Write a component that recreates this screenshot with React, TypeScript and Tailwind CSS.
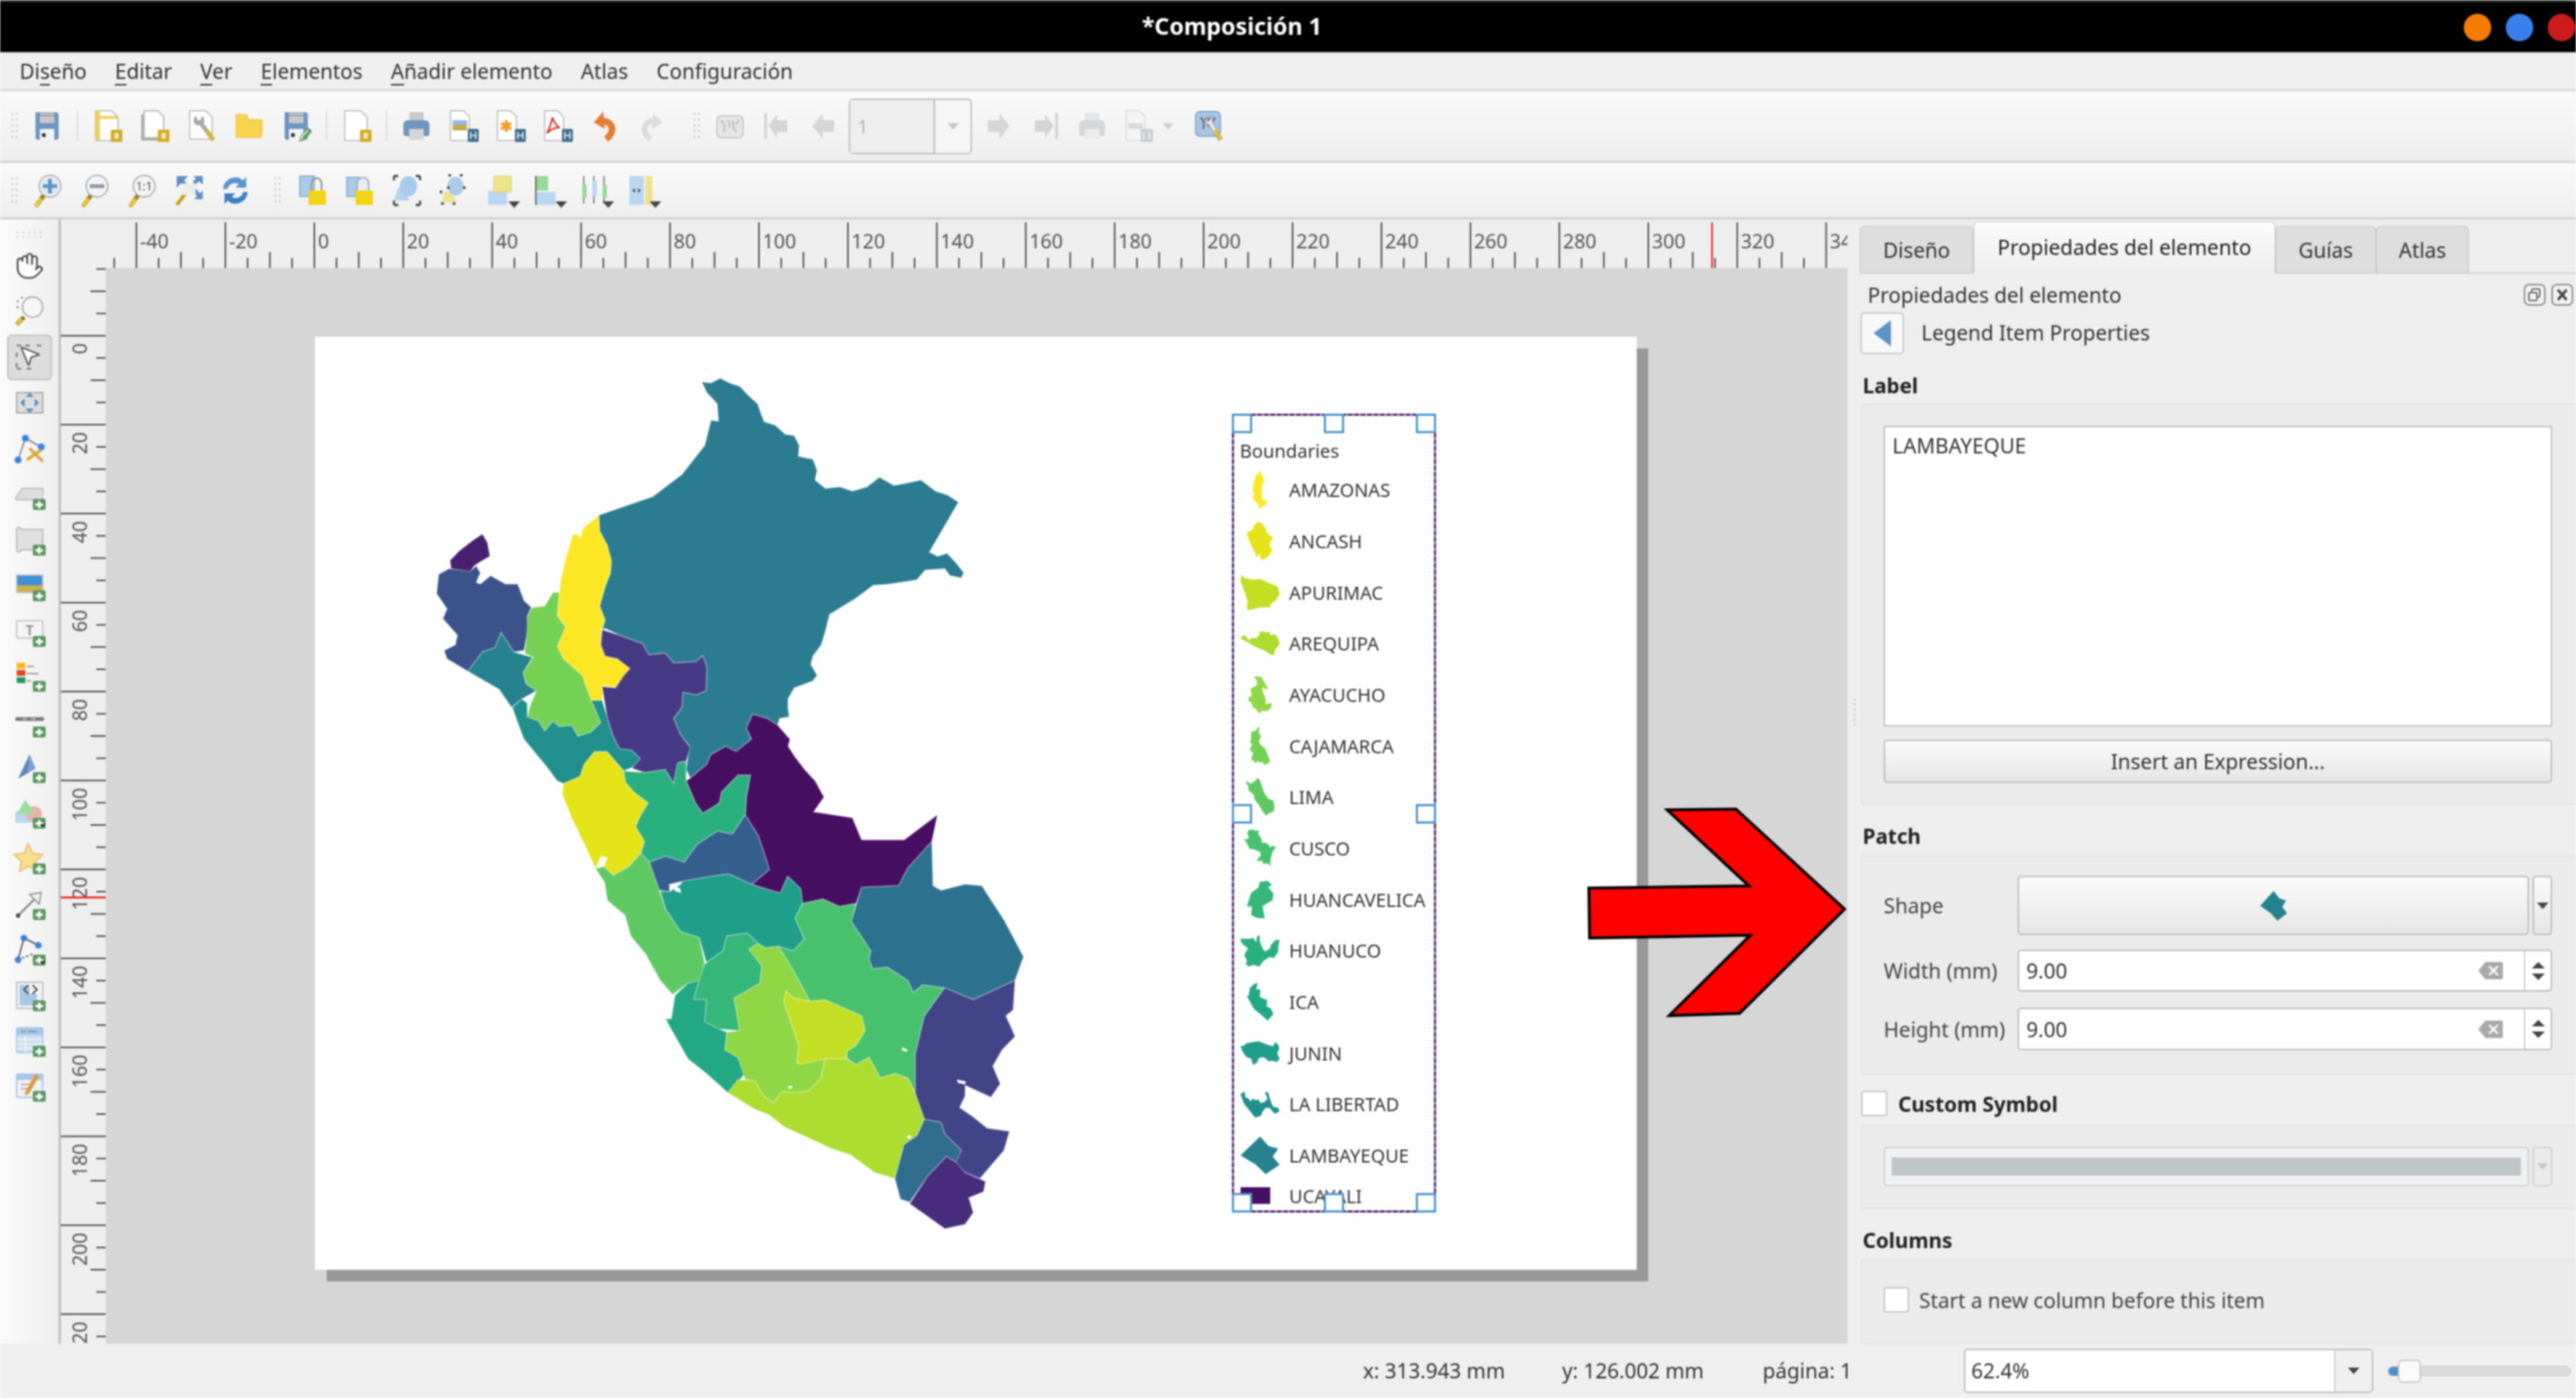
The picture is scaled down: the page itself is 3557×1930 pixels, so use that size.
import { Hand, MousePointer2 } from "lucide-react";
import type { ReactNode } from "react";

// region outlines, traced in the two crop spaces and mapped to screen pixels
const north = (s: string) =>
  s.split(" ").map((p) => {
    const [x, y] = p.split(",").map(Number);
    return [580 + x / 1.742, 500 + y / 2.613];
  });
const south = (s: string) =>
  s.split(" ").map((p) => {
    const [x, y] = p.split(",").map(Number);
    return [700 + x / 1.96, 1080 + y / 2.45];
  });

const regions: Record<string, { fill: string; pts: number[][] }> = {
  LORETO: {
    fill: "#2c7c91",
    pts: north(
      "678,72 700,75 722,58 745,75 770,88 790,120 812,150 820,185 828,215 855,228 878,260 900,265 912,300 910,340 945,350 955,390 950,425 975,455 1010,450 1040,465 1075,450 1105,415 1140,445 1175,435 1205,425 1240,465 1270,480 1295,505 1225,685 1245,700 1268,690 1290,725 1308,760 1302,778 1275,770 1262,745 1215,750 1195,785 1130,800 1090,805 1050,850 985,910 975,970 965,1020 945,1060 940,1090 955,1130 945,1150 900,1175 885,1215 885,1250 888,1280 865,1285 860,1310 835,1285 800,1270 785,1320 797,1360 760,1405 735,1385 700,1415 690,1450 650,1500 640,1470 648,1385 625,1340 610,1285 630,1245 632,1190 665,1200 688,1185 690,1100 680,1058 665,1080 610,1085 590,1050 550,1055 535,1015 480,985 445,960 438,965 445,930 432,880 445,810 458,760 460,715 450,660 432,610 430,552 560,485 630,405 685,300 700,210 718,213 715,150 690,110"
    ),
  },
  AMAZONAS: {
    fill: "#fde725",
    pts: north(
      "430,552 432,610 450,660 460,715 458,760 445,810 432,880 445,930 436,965 435,1020 445,1060 475,1070 505,1105 490,1130 470,1175 440,1165 438,1220 412,1220 390,1130 345,1070 330,1025 350,955 330,915 338,790 350,710 368,620 378,620 385,635 392,600"
    ),
  },
  TUMBES: {
    fill: "#481f70",
    pts: north("150,620 162,650 168,700 145,720 130,735 120,758 75,745 72,715 95,680 125,645"),
  },
  PIURA: {
    fill: "#3b528b",
    pts: north(
      "70,745 120,755 135,735 145,760 135,795 145,800 170,770 205,800 235,800 250,860 268,885 258,915 262,960 255,1000 250,1040 225,1045 195,975 180,1030 150,1045 115,1115 65,1070 58,1040 85,1020 90,985 55,925 65,890 40,835 45,765"
    ),
  },
  LAMBAYEQUE: {
    fill: "#26828e",
    pts: north("195,975 225,1045 270,1065 248,1120 255,1160 280,1185 245,1215 220,1245 190,1180 115,1115 150,1045 180,1030"),
  },
  CAJAMARCA: {
    fill: "#75d054",
    pts: north(
      "320,830 335,830 330,915 350,955 330,1025 345,1070 390,1130 412,1220 435,1300 410,1335 380,1350 365,1310 335,1315 320,1295 300,1330 285,1295 258,1280 265,1240 280,1185 255,1160 248,1120 272,1065 252,1050 258,960 258,915 270,885 300,880"
    ),
  },
  "LA LIBERTAD": {
    fill: "#21908c",
    pts: north(
      "245,1215 258,1230 258,1280 285,1295 300,1330 320,1295 335,1315 365,1310 380,1350 410,1335 435,1300 412,1220 438,1220 450,1280 465,1350 480,1395 510,1400 530,1430 520,1455 490,1475 450,1405 420,1405 395,1450 385,1495 345,1520 330,1510 305,1460 250,1360 235,1300 222,1245"
    ),
  },
  "SAN MARTIN": {
    fill: "#463a84",
    pts: north(
      "438,965 480,985 535,1015 550,1055 590,1050 610,1085 665,1080 680,1058 690,1100 688,1185 665,1200 632,1190 630,1245 610,1285 625,1340 650,1390 640,1440 620,1445 610,1520 590,1470 540,1480 510,1465 530,1430 510,1400 480,1395 465,1350 450,1280 438,1170 470,1175 490,1130 505,1105 475,1070 445,1060 435,1020"
    ),
  },
  UCAYALI: {
    fill: "#470f62",
    pts: south(
      "665,-230 704,-216 733,-193 766,-146 761,-122 778,-89 806,-43 834,-5 858,50 830,100 935,120 960,195 1075,195 1165,110 1150,200 1085,290 1060,350 960,355 945,410 900,420 855,395 800,410 795,360 760,318 740,375 700,360 662,345 710,295 695,235 680,180 645,110 648,50 659,-24 625,-24 581,33 575,70 530,105 510,70 485,-5 496,-14 541,-61 552,-94 592,-122 620,-104 662,-146 648,-183"
    ),
  },
  HUANUCO: {
    fill: "#2ab07f",
    pts: south(
      "316,-38 372,-33 429,-43 451,4 462,-66 485,-71 485,-5 510,70 530,105 575,70 581,33 625,-24 659,-24 648,50 645,110 610,175 570,165 515,210 480,270 430,250 385,270 362,240 372,200 348,150 362,110 382,70 345,35 320,0"
    ),
  },
  ANCASH: {
    fill: "#e4e419",
    pts: south(
      "150,40 175,120 210,210 240,292 255,250 272,255 262,285 288,315 330,285 362,240 372,200 348,150 362,110 382,70 345,35 320,0 316,-38 271,-103 237,-103 209,-61 198,-19 153,4"
    ),
  },
  PASCO: {
    fill: "#35608d",
    pts: south(
      "645,110 680,180 695,235 710,295 662,345 600,310 545,320 475,335 440,345 440,370 412,365 385,270 430,250 480,270 515,210 570,165 610,175"
    ),
  },
  JUNIN: {
    fill: "#1f9e89",
    pts: south(
      "415,368 440,370 470,345 475,335 545,320 600,310 662,345 700,360 740,375 760,318 795,360 800,410 780,460 805,530 775,570 735,555 700,560 680,545 650,510 595,520 585,570 540,610 520,525 470,505 430,430"
    ),
  },
  LIMA: {
    fill: "#5ec962",
    pts: south(
      "240,292 262,285 288,315 330,285 362,240 385,270 412,365 430,430 470,505 520,525 535,610 525,670 490,680 448,718 415,670 375,580 335,520 320,450 272,400 265,340"
    ),
  },
  HUANCAVELICA: {
    fill: "#35b779",
    pts: south("595,520 650,510 680,545 655,565 690,620 685,680 615,730 630,840 575,835 535,810 540,735 505,735 520,670 535,615 585,570"),
  },
  ICA: {
    fill: "#22a884",
    pts: south(
      "490,680 520,670 505,735 540,735 535,810 575,835 595,845 590,905 625,930 645,985 598,1050 540,985 490,935 440,825 430,800 445,800 455,720"
    ),
  },
  AYACUCHO: {
    fill: "#8fd744",
    pts: south(
      "655,565 680,545 700,560 735,555 770,625 820,740 775,730 755,705 750,745 790,890 785,950 860,935 850,1000 815,1045 770,1050 745,1045 720,1085 695,1060 670,1010 645,1005 625,930 590,905 595,845 630,840 615,730 685,680 690,620"
    ),
  },
  APURIMAC: {
    fill: "#c2df23",
    pts: south("755,705 775,730 820,740 860,735 960,790 970,840 945,890 920,910 918,935 860,935 795,955 785,945 790,890 750,745"),
  },
  CUSCO: {
    fill: "#48c16e",
    pts: south(
      "800,410 855,395 900,420 945,410 932,470 985,570 980,600 990,630 1030,625 1085,670 1100,710 1125,685 1185,695 1130,790 1105,920 1105,1050 1085,1000 1050,985 1010,1000 980,930 945,955 920,935 920,910 945,890 970,840 960,790 860,735 820,740 770,625 735,555 775,570 805,530 780,460"
    ),
  },
  AREQUIPA: {
    fill: "#addc30",
    pts: south(
      "598,1050 625,1005 670,1010 695,1060 720,1085 745,1045 770,1050 815,1045 850,1000 860,935 918,935 945,955 980,930 1010,1000 1050,985 1085,1000 1105,1050 1130,1140 1110,1195 1075,1225 1050,1340 995,1320 930,1260 880,1240 820,1205 750,1165 710,1125 670,1105"
    ),
  },
  "MADRE DE DIOS": {
    fill: "#2c728e",
    pts: south(
      "1150,200 1153,350 1175,365 1240,345 1285,350 1345,465 1398,590 1375,670 1262,735 1185,695 1125,685 1100,710 1085,670 1030,625 990,630 980,600 985,570 932,470 960,355 1060,350 1085,290"
    ),
  },
  PUNO: {
    fill: "#414487",
    pts: south(
      "1185,695 1262,735 1375,670 1370,770 1350,790 1365,830 1375,860 1340,905 1315,960 1335,1020 1310,1065 1240,1025 1240,1060 1225,1100 1260,1130 1300,1170 1360,1180 1345,1245 1280,1340 1240,1320 1210,1285 1230,1245 1185,1190 1175,1150 1130,1140 1105,1050 1105,920 1130,790"
    ),
  },
  MOQUEGUA: {
    fill: "#2f6c8e",
    pts: south("1130,1140 1175,1150 1185,1190 1230,1245 1215,1285 1190,1265 1140,1330 1090,1420 1065,1410 1050,1340 1075,1225 1110,1195"),
  },
  TACNA: {
    fill: "#472d7b",
    pts: south("1190,1265 1215,1285 1240,1320 1295,1350 1290,1385 1250,1405 1262,1455 1240,1495 1185,1510 1090,1425 1140,1330"),
  },
};

// little white specks inside the map
const holes = [
  south("448,350 468,358 472,374 455,368"),
  south("1070,897 1085,905 1080,912 1068,905"),
  south("760,1028 772,1026 772,1036 762,1036"),
  south("1083,1195 1095,1195 1092,1206 1084,1204"),
  south("1218,1005 1242,1012 1240,1022 1220,1016"),
];

const legendNames = [
  "AMAZONAS",
  "ANCASH",
  "APURIMAC",
  "AREQUIPA",
  "AYACUCHO",
  "CAJAMARCA",
  "LIMA",
  "CUSCO",
  "HUANCAVELICA",
  "HUANUCO",
  "ICA",
  "JUNIN",
  "LA LIBERTAD",
  "LAMBAYEQUE",
];

const ptsAttr = (pts: number[][]) => pts.map((p) => p.join(",")).join(" ");
const diamond = "180,1215 210,1250 245,1260 225,1290 250,1320 200,1355 165,1320 110,1285";

function Patch({ name }: { name: string }) {
  const r = regions[name];
  if (name === "LAMBAYEQUE") {
    return (
      <svg viewBox="110 1215 140 140" className="h-full w-full" preserveAspectRatio="none">
        <polygon points={diamond} fill={r.fill} />
      </svg>
    );
  }
  const xs = r.pts.map((p) => p[0]);
  const ys = r.pts.map((p) => p[1]);
  const x = Math.min(...xs);
  const y = Math.min(...ys);
  return (
    <svg viewBox={`${x} ${y} ${Math.max(...xs) - x} ${Math.max(...ys) - y}`} className="h-full w-full">
      <polygon points={ptsAttr(r.pts)} fill={r.fill} />
    </svg>
  );
}

function PeruMap() {
  return (
    <svg viewBox="580 510 860 1210" className="ml-[145px] mt-[45px] h-[1210px] w-[860px] shrink-0">
      {Object.entries(regions).map(([name, r]) => (
        <polygon key={name} points={ptsAttr(r.pts)} fill={r.fill} stroke="#ffffff" strokeOpacity="0.3" strokeWidth="1.5" strokeLinejoin="round" />
      ))}
      {holes.map((h, i) => (
        <polygon key={i} points={ptsAttr(h)} fill="#fff" />
      ))}
    </svg>
  );
}

function Handle({ className }: { className: string }) {
  return <div className={"absolute h-[27px] w-[28px] border-[3px] border-[#4b95cd] bg-white " + className} />;
}

function Legend() {
  return (
    <div className="relative ml-[261px] mt-[106px] h-[1103px] w-[282px] shrink-0 border-[3px] border-[#58a9dd] font-['Noto_Sans',sans-serif] text-[25.5px] text-[#333]">
      <div className="h-full overflow-hidden pl-[8px] pt-[34px]">
        <div className="h-[28px] leading-[28px]">Boundaries</div>
        <div className="mt-[5px]">
          {legendNames.map((n) => (
            <div key={n} className="flex h-[70.7px] items-center">
              <div className="ml-[1px] h-[52px] w-[54px] shrink-0">
                <Patch name={n} />
              </div>
              <span className="ml-[13px] whitespace-nowrap">{n}</span>
            </div>
          ))}
          <div className="flex h-[40px] items-center">
            <div className="ml-[1px] h-[23px] w-[41px] shrink-0 bg-[#470f62]" />
            <span className="ml-[26px] whitespace-nowrap">UCAYALI</span>
          </div>
        </div>
      </div>
      <div className="pointer-events-none absolute -inset-[3px] border-[3px] border-dashed border-[#6e1b5c]" />
      <Handle className="-left-[3px] -top-[3px]" />
      <Handle className="left-[124px] -top-[3px]" />
      <Handle className="-right-[3px] -top-[3px]" />
      <Handle className="-left-[3px] top-[536px]" />
      <Handle className="-right-[3px] top-[536px]" />
      <Handle className="-left-[3px] -bottom-[3px]" />
      <Handle className="left-[124px] -bottom-[3px]" />
      <Handle className="-right-[3px] -bottom-[3px]" />
    </div>
  );
}

function HorizontalRuler() {
  const vals: number[] = [];
  for (let v = -45; v <= 340; v += 5) vals.push(v);
  return (
    <svg className="block h-[67px] w-[2467px] shrink-0" viewBox="0 0 2467 67">
      {vals.map((v) => {
        const x = 350 + v * 6.14;
        const y1 = v % 20 === 0 ? 4 : v % 10 === 0 ? 45 : 53;
        return (
          <g key={v}>
            <line x1={x} x2={x} y1={y1} y2={67} stroke="#444" strokeWidth="2" />
            {v % 20 === 0 && (
              <text x={x + 5} y={40} fontSize="27" fill="#555" fontFamily="Noto Sans, sans-serif">
                {v}
              </text>
            )}
          </g>
        );
      })}
      <line x1={2280} x2={2280} y1={4} y2={67} stroke="#f01010" strokeWidth="2" />
    </svg>
  );
}

function VerticalRuler() {
  const vals: number[] = [];
  for (let v = -15; v <= 225; v += 5) vals.push(v);
  return (
    <svg className="block h-[1485px] w-[62px] shrink-0" viewBox="0 0 62 1485">
      {vals.map((v) => {
        const y = 93.5 + v * 6.14;
        const x1 = v % 20 === 0 ? 0 : v % 10 === 0 ? 41 : 49;
        return (
          <g key={v}>
            <line x1={x1} x2={62} y1={y} y2={y} stroke="#444" strokeWidth="2" />
            {v % 20 === 0 && v >= 0 && (
              <text
                transform={`translate(36 ${y + 10}) rotate(-90)`}
                textAnchor="end"
                fontSize="27"
                fill="#555"
                fontFamily="Noto Sans, sans-serif"
              >
                {v}
              </text>
            )}
          </g>
        );
      })}
      <line x1={0} x2={62} y1={869} y2={869} stroke="#f01010" strokeWidth="2.5" />
    </svg>
  );
}

// ---- icons ----
function Ic({ children, size = 48 }: { children: ReactNode; size?: number }) {
  return (
    <svg viewBox="0 0 24 24" width={size} height={size} className="shrink-0">
      {children}
    </svg>
  );
}

const page = <path d="M3.500 1.500h11l4.500 4.500V22H3.500z" fill="#fff" stroke="#c4c4c4" />;
const yellowBadge = (
  <g>
    <rect x="14" y="14.500" width="8" height="8.500" rx="0.8" fill="#d3ad22" />
    <path d="M18 16l1.700 4.500h-3.400zM18 21.500l-1.700-4.500h3.400z" fill="#fff" opacity="0.8" />
  </g>
);
const blueBadge = (
  <g>
    <rect x="15" y="14" width="7.500" height="9" rx="0.8" fill="#3f6d8c" />
    <path d="M17 16v5M20.500 16v5M17 18.500h3.500" stroke="#d5e0e8" strokeWidth="1" />
  </g>
);
const plus = (
  <g>
    <rect x="14.200" y="15.500" width="8.800" height="7.500" rx="1" fill="#5a9660" />
    <path d="M18.600 17v4.800M16 19.400h5.200" stroke="#fff" strokeWidth="1.600" />
  </g>
);
const floppy = (
  <g>
    <path d="M4 2.500h14.500a2 2 0 0 1 1.500 1.500V20a2 2 0 0 1-1.500 1.500H5.500A2 2 0 0 1 4 20z" fill="#6c96c2" />
    <rect x="7" y="3" width="10" height="7" fill="#c9c9c9" />
    <rect x="7" y="4.200" width="10" height="1" fill="#9a9a9a" />
    <rect x="7" y="14" width="10" height="7.500" fill="#f2f2f2" />
    <rect x="8.500" y="17" width="2.500" height="2.500" fill="#333" />
  </g>
);
const magnifier = (
  <g>
    <path d="M5 22l5-7" stroke="#9a7a1a" strokeWidth="3" strokeLinecap="round" />
    <path d="M5 22l2.500-3.500" stroke="#e8c62a" strokeWidth="2.600" strokeLinecap="round" />
    <circle cx="14" cy="9" r="7.500" fill="#f4f4f4" stroke="#b0b0b0" strokeWidth="1" />
  </g>
);
const grayMap = (
  <g>
    <rect x="3" y="5" width="18" height="15" rx="3" fill="#e6e6e6" stroke="#c6c6c6" />
    <path d="M6 8l2 3v5M10 8l2 2-1 3M14 8v4l2 4M18 8l-2 3" stroke="#bdbdbd" strokeWidth="1.200" fill="none" />
  </g>
);

const topIcons = {
  save: <Ic>{floppy}</Ic>,
  newLayout: (
    <Ic>
      {page}
      <path d="M3.500 1.500h3V22h-3zM3.500 5h15v2h-15z" fill="#ecd05a" />
      {yellowBadge}
    </Ic>
  ),
  duplicate: (
    <Ic>
      <rect x="2.500" y="4" width="15" height="18" fill="#aaa" />
      <path d="M4.500 1.500h9.500l4 4V20h-13.500z" fill="#fff" stroke="#bbb" />
      {yellowBadge}
    </Ic>
  ),
  manager: (
    <Ic>
      <path d="M3.500 1.500h11l4.500 4.500V21H3.500z" fill="#fff" stroke="#c4c4c4" />
      <path d="M8 5a3.500 3.500 0 0 0 2.500 6.500l8 11 2.500-1.500-8-11a3.500 3.500 0 0 0-1-5l-1 3h-2z" fill="#a8a8a8" />
      <path d="M14.500 15l4 7.500 2.500-1.500-4.500-7z" fill="#d9b92e" />
    </Ic>
  ),
  folder: (
    <Ic>
      <path d="M3 4h7l2 3.500h9V18l-1 2H3z" fill="#f8d44e" stroke="#e6bd30" strokeWidth="0.5" />
    </Ic>
  ),
  saveAs: (
    <Ic>
      {floppy}
      <path d="M14 23l1-4 5-6 3 2.500-5 6z" fill="#5d9a63" />
      <path d="M15.500 21.500l.5-2 4-4.500" stroke="#fff" strokeWidth="0.8" fill="none" />
    </Ic>
  ),
  addPage: (
    <Ic>
      {page}
      {yellowBadge}
    </Ic>
  ),
  print: (
    <Ic>
      <rect x="7" y="2.500" width="10" height="7" fill="#c8c8c8" />
      <path d="M3 11a3 3 0 0 1 3-3h12a3 3 0 0 1 3 3v6a2 2 0 0 1-2 2H5a2 2 0 0 1-2-2z" fill="#6d96c0" />
      <rect x="7" y="14" width="10" height="7.500" fill="#d6d6d6" />
    </Ic>
  ),
  expImage: (
    <Ic>
      <path d="M3 1.500h9l4 4V22H3z" fill="#fff" stroke="#c4c4c4" />
      <rect x="4.500" y="8" width="10" height="3" fill="#8fbbe0" />
      <rect x="4.500" y="11" width="10" height="4" fill="#c7aa4c" />
      {blueBadge}
    </Ic>
  ),
  expSvg: (
    <Ic>
      <path d="M3 1.500h9l4 4V22H3z" fill="#fff" stroke="#c4c4c4" />
      <path d="M9 8v8M5.500 10l7 4M12.500 10l-7 4" stroke="#f39a22" strokeWidth="2" />
      {blueBadge}
    </Ic>
  ),
  expPdf: (
    <Ic>
      <path d="M3 1.500h9l4 4V22H3z" fill="#fff" stroke="#c4c4c4" />
      <path d="M8.500 6c-1 4-2 8-4 11M8.500 6c1 4 3 6 5 7M4.500 17c3-3 6-4 9-4" stroke="#d83a30" strokeWidth="1.200" fill="none" />
      {blueBadge}
    </Ic>
  ),
  undo: (
    <Ic>
      <path d="M10 8.500c5 0 7.500 3 7 6.500-.4 2.500-2 4.500-4 6" stroke="#e57c33" strokeWidth="4.500" fill="none" />
      <path d="M11 2L4.500 9.500 12 14z" fill="#e57c33" />
    </Ic>
  ),
  redo: (
    <Ic>
      <path d="M14 8.500c-5 0-7.500 3-7 6.500.4 2.500 2 4.500 4 6" stroke="#dcdcdc" strokeWidth="4" fill="none" />
      <path d="M13 3l6.500 6.500L12 14z" fill="#dcdcdc" />
    </Ic>
  ),
  atlas: <Ic>{grayMap}</Ic>,
  first: (
    <Ic>
      <rect x="3" y="3" width="2" height="18" fill="#d4d4d4" />
      <path d="M6 12l6-8v4h7v8h-7v4z" fill="#d4d4d4" />
    </Ic>
  ),
  prev: (
    <Ic>
      <path d="M4 12l7-9v5h8v8h-8v5z" fill="#d6d6d6" />
    </Ic>
  ),
  next: (
    <Ic>
      <path d="M20 12l-7-9v5H5v8h8v5z" fill="#d6d6d6" />
    </Ic>
  ),
  last: (
    <Ic>
      <rect x="19" y="3" width="2" height="18" fill="#d4d4d4" />
      <path d="M18 12l-6-8v4H5v8h7v4z" fill="#d4d4d4" />
    </Ic>
  ),
  printOff: (
    <Ic>
      <rect x="7" y="3" width="10" height="6" fill="#e4e4e4" />
      <path d="M3 11a3 3 0 0 1 3-3h12a3 3 0 0 1 3 3v6a2 2 0 0 1-2 2H5a2 2 0 0 1-2-2z" fill="#d4d7d9" />
      <rect x="7" y="14" width="10" height="7" fill="#ececec" />
    </Ic>
  ),
  expOff: (
    <Ic>
      <path d="M3 1.500h9l4 4V22H3z" fill="#f4f4f4" stroke="#dedede" />
      <rect x="4.500" y="10" width="10" height="4" fill="#dcdcd4" />
      <rect x="13" y="14" width="8.500" height="9" rx="1" fill="#c9cdd0" />
      <path d="M15 16v5M19 16v5" stroke="#f0f0f0" />
    </Ic>
  ),
  atlasSettings: (
    <Ic>
      <rect x="2.500" y="2" width="17" height="17" rx="3" fill="#a9c4e3" stroke="#86a8d0" />
      <path d="M6 6l2 3v5M11 6l1 3-1 3M16 6l-2 3" stroke="#5c6d80" strokeWidth="1.200" fill="none" />
      <path d="M9 6a3.500 3.500 0 0 0 2.500 5l7 11 2.500-1.500-7-11a3.500 3.500 0 0 0-1-4l-1 3-2 0z" fill="#eee" stroke="#777" strokeWidth="0.5" />
      <path d="M15 15l3.500 7 2.500-1.500-4-7z" fill="#e0c034" />
    </Ic>
  ),
  zoomIn: (
    <Ic>
      {magnifier}
      <circle cx="14" cy="9" r="6" fill="#dfe8f2" />
      <path d="M14 4v10M9 9h10" stroke="#5f8fc4" strokeWidth="2.600" />
    </Ic>
  ),
  zoomOut: (
    <Ic>
      {magnifier}
      <path d="M9 9h10" stroke="#8a98a8" strokeWidth="2.600" />
    </Ic>
  ),
  zoom100: (
    <Ic>
      {magnifier}
      <text x="14" y="12" textAnchor="middle" fontSize="8" fill="#555" fontFamily="Noto Sans, sans-serif">
        1:1
      </text>
    </Ic>
  ),
  zoomFull: (
    <Ic>
      <path d="M4 22l6-8" stroke="#c9a326" strokeWidth="2.600" />
      <path d="M7 2h5L9 5l3 3-2 2-3-3-3 3V2zM22 2v6l-2.500-2.500L17 8l-2-2 2.500-2.500L15 2zM22 18h-6l2-2-2.500-3 2-2 2.500 3 2-2z" fill="#5f8fc4" />
      <rect x="8" y="7" width="9" height="8" fill="#ececec" />
    </Ic>
  ),
  refresh: (
    <Ic>
      <path d="M3.500 11a8.500 8.500 0 0 1 14-6l2-2.500V10h-7.500l2.500-2.500a5.500 5.500 0 0 0-8 3.500z" fill="#5a93cf" />
      <path d="M20.500 13a8.500 8.500 0 0 1-14 6l-2 2.500V14H12l-2.500 2.500a5.500 5.500 0 0 0 8-3.500z" fill="#3c7fc4" />
    </Ic>
  ),
  lock: (
    <Ic>
      <rect x="3" y="2" width="10" height="14" fill="#a8cbea" stroke="#8fb2d4" />
      <path d="M11 13V7a3.500 3.500 0 0 1 7 0v6" fill="none" stroke="#9a9a9a" strokeWidth="1.300" />
      <rect x="9" y="12" width="12" height="10" fill="#f1d515" />
    </Ic>
  ),
  unlockAll: (
    <Ic>
      <rect x="3" y="3" width="9" height="13" fill="#a8cbea" stroke="#8fb2d4" />
      <path d="M10 13V7a4 4 0 0 1 8 0v6" fill="#e8eef4" stroke="#a8b4c0" strokeWidth="1.300" />
      <rect x="9" y="12" width="12" height="10" fill="#f1d515" />
    </Ic>
  ),
  group: (
    <Ic>
      <ellipse cx="13" cy="9" rx="6" ry="7" fill="#a8cbea" />
      <path d="M9 10h-3l-3 9h11z" fill="#a8cbea" opacity="0.8" />
      <path d="M3 2h3M3 2v3M21 2h-3M21 2v3M3 22h3M3 22v-3M21 22h-3M21 22v-3" stroke="#444" strokeWidth="1.400" />
    </Ic>
  ),
  ungroup: (
    <Ic>
      <ellipse cx="13" cy="9" rx="5.500" ry="6.500" fill="#a8cbea" />
      <path d="M9 13H5l-1 7h10z" fill="#efe38a" />
      <path d="M8 1.500h2M16 1.500h2M19 9v2M3 12v2M3 21h2M11 21h2M8 9v2" stroke="#444" strokeWidth="1.500" />
    </Ic>
  ),
  raise: (
    <Ic>
      <rect x="3" y="12" width="13" height="10" fill="#b9d7f0" />
      <rect x="7" y="2" width="12" height="11" fill="#efe38a" stroke="#d8cc70" strokeWidth="0.5" />
    </Ic>
  ),
  align: (
    <Ic>
      <rect x="3" y="2" width="0.9" height="20" fill="#555" />
      <rect x="4" y="2" width="8" height="10" fill="#9ad89a" />
      <rect x="4" y="13" width="13" height="9" fill="#b9d7f0" />
    </Ic>
  ),
  distribute: (
    <Ic>
      <path d="M4 2v19M11 2v19M18 2v19" stroke="#666" strokeWidth="0.8" />
      <rect x="3" y="8" width="3" height="9" fill="#9ad89a" />
      <rect x="10" y="5" width="3" height="11" fill="#b9d7f0" />
      <rect x="17" y="8" width="3" height="9" fill="#9ad89a" />
    </Ic>
  ),
  resize: (
    <Ic>
      <rect x="3" y="2" width="10" height="20" fill="#b9d7f0" />
      <rect x="14" y="2" width="5" height="20" fill="#efe38a" />
      <path d="M5 12l2-1.500v3zM11 12l-2-1.500v3z" fill="#444" />
    </Ic>
  ),
};

const toolIcons: ReactNode[] = [
  <Hand key="a" size={40} strokeWidth={1.400} color="#444" fill="#fff" className="-scale-x-100" />,
  <Ic key="b">
    <path d="M3 21l5-5" stroke="#6b5a10" strokeWidth="3" />
    <path d="M3 21l4-4" stroke="#e3c325" strokeWidth="2.400" />
    <circle cx="14" cy="9" r="7" fill="#f6f6f6" stroke="#aaa" />
    <path d="M3 5h1.500M3 9h1.500M6 2.500h1.500" stroke="#777" />
  </Ic>,
  <div key="c" className="relative">
    <Ic>
      <path d="M3 4h3M9 4h3M17 4h3M3 9v3M3 16v3M3 20h3M10 20h3" stroke="#777" strokeWidth="1.200" />
    </Ic>
    <MousePointer2 size={34} strokeWidth={1.500} color="#555" fill="#fff" className="absolute left-[7px] top-[5px]" />
  </div>,
  <Ic key="d">
    <rect x="3" y="5" width="18" height="14" fill="#ddd" stroke="#aaa" />
    <path d="M12 5l3 3h-6zM12 19l3-3H9zM5.500 12l3-3v6zM18.500 12l-3-3v6z" fill="#5f8fc4" />
  </Ic>,
  <Ic key="e">
    <path d="M4 20l5-15 11 6" stroke="#888" fill="none" />
    <circle cx="4" cy="20" r="2.400" fill="#3b82e0" />
    <circle cx="9" cy="5" r="2.400" fill="#3b82e0" />
    <circle cx="20" cy="11" r="2.400" fill="#3b82e0" />
    <path d="M10 20l10-7M12 12l9 9" stroke="#d4aa3a" strokeWidth="2.200" />
  </Ic>,
  <Ic key="f">
    <path d="M2 15l5-7h14v8H3z" fill="#d8d8d8" stroke="#c4c4c4" />
    <path d="M7 10h13M6 12h15M5 14h16" stroke="#eee" strokeWidth="0.6" />
    {plus}
  </Ic>,
  <Ic key="g">
    <path d="M3 5a1.500 1.500 0 0 1 3 0h15v14H6a1.500 1.500 0 0 1-3 0z" fill="#e0e0e0" stroke="#bbb" />
    {plus}
  </Ic>,
  <Ic key="h">
    <rect x="3" y="5" width="18" height="7" fill="#3f8fd8" />
    <rect x="3" y="12" width="18" height="5" fill="#cfae4c" />
    <rect x="3" y="5" width="18" height="12" fill="none" stroke="#c0c0c0" />
    {plus}
  </Ic>,
  <Ic key="i">
    <rect x="3" y="5" width="18" height="12" rx="1" fill="#f4f4f4" stroke="#c4c4c4" />
    <text x="12" y="15" textAnchor="middle" fontSize="10" fontWeight="700" fill="#999" fontFamily="Noto Sans, sans-serif">
      T
    </text>
    {plus}
  </Ic>,
  <Ic key="j">
    <rect x="3" y="3" width="6" height="4" fill="#fdb813" />
    <rect x="3" y="8" width="6" height="4" fill="#e2471b" />
    <rect x="3" y="13" width="6" height="4" fill="#1a9a5c" />
    <path d="M10 5.500h5M10 10.500h8M10 15.500h3" stroke="#999" strokeWidth="0.9" />
    {plus}
  </Ic>,
  <Ic key="k">
    <rect x="2" y="9" width="20" height="2.600" rx="1.300" fill="#777" />
    <path d="M7 10.300h3M13 10.300h3" stroke="#ccc" />
    {plus}
  </Ic>,
  <Ic key="l">
    <path d="M12 3l-8 17 7-4z" fill="#5f86b8" />
    <path d="M12 3l4 10-5 3z" fill="#7ba1cf" />
    {plus}
  </Ic>,
  <Ic key="m">
    <rect x="2" y="11" width="13" height="8" fill="#b9d7f0" />
    <circle cx="15" cy="13" r="5.500" fill="#eeb0a8" />
    <path d="M9 3l7 10H3z" fill="#9fdc9f" />
    {plus}
    <path d="M19 20h4l-2 2z" fill="#222" />
  </Ic>,
  <Ic key="n">
    <path d="M11 2l3 6.500 7 .8-5 4.700 1.300 7L11 17.500 5 21l1.200-7-5-4.700 7-.8z" fill="#f8e08e" stroke="#eebb77" />
    {plus}
  </Ic>,
  <Ic key="o">
    <path d="M4 20L17 7" stroke="#888" strokeWidth="1.300" />
    <circle cx="4" cy="20" r="1.500" fill="#444" />
    <path d="M20 4l-8 1.500 6.500 6.500z" fill="#f2f2f2" stroke="#999" />
    {plus}
  </Ic>,
  <Ic key="p">
    <path d="M8 4L4 19M8 4l10 5" stroke="#555" strokeWidth="1" />
    <path d="M4 19l10-4" stroke="#555" strokeDasharray="1.500 1.500" />
    <circle cx="4" cy="19" r="2.300" fill="#3b82e0" />
    <circle cx="8" cy="4" r="2.300" fill="#3b82e0" />
    <circle cx="18" cy="9" r="2.300" fill="#3b82e0" />
    {plus}
    <path d="M19 20h4l-2 2z" fill="#222" />
  </Ic>,
  <Ic key="q">
    <rect x="3" y="3" width="18" height="18" fill="#f2f2f2" stroke="#c0c0c0" />
    <path d="M5 5h7v6h5v8H5z" fill="#a8c6e6" />
    <path d="M11 5l-3 3 3 3M14 5l3 3-3 3" stroke="#444" fill="none" />
    {plus}
  </Ic>,
  <Ic key="r">
    <rect x="3" y="3" width="18" height="17" rx="1" fill="#cfdff0" stroke="#a8c6e6" />
    <rect x="3" y="3" width="18" height="5" fill="#a8c6e6" />
    <path d="M6 5.500h3M11 5.500h6" stroke="#6d96c0" strokeWidth="0.9" />
    <path d="M3 11h18M3 14h18M3 17h18M9 8v12" stroke="#f4f8fc" strokeWidth="0.8" />
    {plus}
  </Ic>,
  <Ic key="s">
    <rect x="3" y="4" width="18" height="16" rx="1" fill="#eef2f6" stroke="#a8c6e6" />
    <rect x="3" y="4" width="18" height="4" fill="#a8c6e6" />
    <path d="M6 11h7M6 14h5" stroke="#999" strokeWidth="0.8" />
    <path d="M9 16l7-12 2.500 1.500-7 12-3 1z" fill="#e29a3a" />
    {plus}
  </Ic>,
];

function Grip() {
  return <div className="h-[42px] w-[10px] bg-[radial-gradient(#c4c4c4_1px,transparent_1.5px)] bg-[length:6px_8px]" />;
}

function Slot({ children }: { children: ReactNode }) {
  return <div className="flex h-full w-[65px] shrink-0 items-center justify-center">{children}</div>;
}

function Sep({ className }: { className: string }) {
  return (
    <div className={"flex h-full shrink-0 items-center justify-center " + className}>
      <div className="h-[42px] w-[2px] bg-[#dcdcdc]" />
    </div>
  );
}

function SmallArrow({ className }: { className: string }) {
  return <div className={"h-0 w-0 border-x-[8px] border-t-[9px] border-x-transparent " + className} />;
}

function WithArrow({ children }: { children: ReactNode }) {
  return (
    <div className="relative">
      {children}
      <SmallArrow className="absolute bottom-0 -right-[2px] border-t-[#444]" />
    </div>
  );
}

function Toolbar1() {
  return (
    <div className="flex h-[99px] shrink-0 items-center border-b-[3px] border-[#d4d4d4] bg-linear-to-b from-[#fafafa] to-[#eeeeee]">
      <div className="flex w-[32px] shrink-0 justify-end pr-[8px]">
        <Grip />
      </div>
      <Slot>{topIcons.save}</Slot>
      <Sep className="w-[19px]" />
      <Slot>{topIcons.newLayout}</Slot>
      <Slot>{topIcons.duplicate}</Slot>
      <Slot>{topIcons.manager}</Slot>
      <Slot>{topIcons.folder}</Slot>
      <Slot>{topIcons.saveAs}</Slot>
      <Sep className="w-[19px]" />
      <Slot>{topIcons.addPage}</Slot>
      <Sep className="w-[17px]" />
      <Slot>{topIcons.print}</Slot>
      <Slot>{topIcons.expImage}</Slot>
      <Slot>{topIcons.expSvg}</Slot>
      <Slot>{topIcons.expPdf}</Slot>
      <Slot>{topIcons.undo}</Slot>
      <Slot>{topIcons.redo}</Slot>
      <div className="flex w-[43px] shrink-0 justify-end pr-[9px]">
        <Grip />
      </div>
      <Slot>{topIcons.atlas}</Slot>
      <Slot>{topIcons.first}</Slot>
      <Slot>{topIcons.prev}</Slot>
      <div className="ml-[2px] flex h-[77px] w-[170px] shrink-0 rounded-[6px] border-2 border-[#bdbdbd] bg-[#f6f6f6]">
        <div className="flex w-[117px] items-center border-r-2 border-[#b5b5b5] bg-[#eeeeee] pl-[10px] text-[26px] text-[#b8b09a]">1</div>
        <div className="flex flex-1 items-center justify-center">
          <SmallArrow className="border-t-[#c4c8cc]" />
        </div>
      </div>
      <div className="ml-[3px] flex h-full">
        <Slot>{topIcons.next}</Slot>
        <Slot>{topIcons.last}</Slot>
        <Slot>{topIcons.printOff}</Slot>
        <Slot>{topIcons.expOff}</Slot>
      </div>
      <div className="flex w-[32px] shrink-0 justify-start">
        <SmallArrow className="border-t-[#ccd0d4]" />
      </div>
      <Slot>{topIcons.atlasSettings}</Slot>
    </div>
  );
}

function Toolbar2() {
  return (
    <div className="flex h-[78px] shrink-0 items-center border-b-[3px] border-[#d0d0d0] bg-linear-to-b from-[#fafafa] to-[#eeeeee]">
      <div className="flex w-[32px] shrink-0 justify-end pr-[8px]">
        <Grip />
      </div>
      <Slot>{topIcons.zoomIn}</Slot>
      <Slot>{topIcons.zoomOut}</Slot>
      <Slot>{topIcons.zoom100}</Slot>
      <Slot>{topIcons.zoomFull}</Slot>
      <Slot>{topIcons.refresh}</Slot>
      <div className="flex w-[42px] shrink-0 justify-start pl-[20px]">
        <Grip />
      </div>
      <Slot>{topIcons.lock}</Slot>
      <Slot>{topIcons.unlockAll}</Slot>
      <Slot>{topIcons.group}</Slot>
      <Slot>{topIcons.ungroup}</Slot>
      <Slot>
        <WithArrow>{topIcons.raise}</WithArrow>
      </Slot>
      <Slot>
        <WithArrow>{topIcons.align}</WithArrow>
      </Slot>
      <Slot>
        <WithArrow>{topIcons.distribute}</WithArrow>
      </Slot>
      <Slot>
        <WithArrow>{topIcons.resize}</WithArrow>
      </Slot>
    </div>
  );
}

function LeftTools() {
  return (
    <div className="flex w-[84px] shrink-0 flex-col items-center border-r-[3px] border-[#bcbcbc] bg-linear-to-r from-[#fbfbfb] to-[#eeeeee]">
      <div className="mt-[15px] h-[10px] w-[42px] bg-[radial-gradient(#c4c4c4_1px,transparent_1.5px)] bg-[length:8px_6px]" />
      <div className="mt-[8px] flex flex-col items-center">
        {toolIcons.map((icon, i) => (
          <div
            key={i}
            className={
              "flex h-[62.9px] w-[62px] items-center justify-center " +
              (i === 2 ? "rounded-[6px] border-2 border-[#c0c0c0] bg-[#dcdcdc]" : "")
            }
          >
            {icon}
          </div>
        ))}
      </div>
    </div>
  );
}

function GroupBox({ className, children }: { className: string; children: ReactNode }) {
  return <div className={"rounded-l-[4px] border border-r-0 border-[#dcdcdc] bg-[#ebebeb] pl-[30px] pr-[33px] " + className}>{children}</div>;
}

function Heading({ className, children }: { className: string; children: ReactNode }) {
  return <div className={"h-[28px] pl-[2px] text-[28.5px] font-bold leading-[28px] text-[#222] " + className}>{children}</div>;
}

function NumberField({ label }: { label: string }) {
  return (
    <div className="flex h-full">
      <div className="flex w-[185px] shrink-0 items-center">{label}</div>
      <div className="flex flex-1 rounded-[5px] border-2 border-[#bbbbbb] bg-white">
        <div className="flex flex-1 items-center pl-[10px] text-[#333]">9.00</div>
        <div className="flex w-[92px] items-center justify-center">
          <svg width="34" height="26" viewBox="0 0 34 26">
            <path d="M10 1h22a2 2 0 0 1 2 2v20a2 2 0 0 1-2 2H10L0 13z" fill="#a9a9a9" />
            <path d="M15 7l12 12M27 7L15 19" stroke="#fff" strokeWidth="2.500" />
          </svg>
        </div>
        <div className="flex w-[37px] flex-col items-center justify-center gap-[7px] border-l-2 border-[#cfcfcf]">
          <div className="h-0 w-0 border-x-[9px] border-b-[9px] border-x-transparent border-b-[#444]" />
          <div className="h-0 w-0 border-x-[9px] border-t-[9px] border-x-transparent border-t-[#444]" />
        </div>
      </div>
    </div>
  );
}

function Tabs() {
  const tab = "flex h-[64px] items-center justify-center rounded-t-[6px] border border-b-0 border-[#c4c4c4] bg-[#dedede] text-[#333]";
  return (
    <div className="-ml-[2px] flex h-[75px] shrink-0 items-end border-b-2 border-[#cfcfcf] pb-0">
      <div className={tab + " w-[157px]"}>Diseño</div>
      <div className="-mb-[2px] flex h-[72px] w-[417px] items-center justify-center rounded-t-[6px] border border-b-0 border-[#c4c4c4] bg-linear-to-b from-[#fbfbfb] to-[#eeeeee] pb-[4px] text-[#222]">
        Propiedades del elemento
      </div>
      <div className={tab + " w-[139px]"}>Guías</div>
      <div className={tab + " w-[128px]"}>Atlas</div>
    </div>
  );
}

function PropertiesPanel() {
  return (
    <div className="flex min-w-0 flex-1 bg-[#eeeeee]">
      <div className="flex w-[19px] shrink-0 items-center justify-center">
        <div className="-mt-[190px] h-[44px] w-[6px] bg-[radial-gradient(#c4c4c4_1px,transparent_1.5px)] bg-[length:6px_7px]" />
      </div>
      <div className="min-w-0 flex-1 text-[28.5px] leading-[34px] text-[#333]">
        <Tabs />
        <div className="flex h-[53px] items-center justify-between pl-[9px] pr-[4px] pt-[4px] text-[#333]">
          <span>Propiedades del elemento</span>
          <div className="flex gap-[8px]">
            <svg width="30" height="30" viewBox="0 0 30 30">
              <rect x="1" y="1" width="28" height="28" rx="6" fill="#f2f2f2" stroke="#888" strokeWidth="2" />
              <rect x="11" y="7" width="11" height="11" rx="2" fill="none" stroke="#666" strokeWidth="2" />
              <rect x="7" y="12" width="11" height="11" rx="2" fill="#f2f2f2" stroke="#666" strokeWidth="2" />
            </svg>
            <svg width="30" height="30" viewBox="0 0 30 30">
              <rect x="1" y="1" width="28" height="28" rx="6" fill="#f2f2f2" stroke="#888" strokeWidth="2" />
              <path d="M9 8l12 14M21 8L9 22" stroke="#444" strokeWidth="3.500" />
            </svg>
          </div>
        </div>
        <div className="flex h-[58px] items-center">
          <div className="-ml-px flex h-[58px] w-[60px] items-center justify-center rounded-[5px] border-2 border-[#c8c8c8] bg-[#f8f8f8]">
            <div className="h-0 w-0 border-y-[18px] border-r-[24px] border-y-transparent border-r-[#5e92c8]" />
          </div>
          <span className="ml-[24px] -mt-[3px]">Legend Item Properties</span>
        </div>
        <Heading className="mt-[29px]">Label</Heading>
        <GroupBox className="mt-[12px] h-[553px] pt-[29px]">
          <div className="h-[415px] border-2 border-[#c0c0c0] bg-white px-[10px] py-[8px] text-[#333]">LAMBAYEQUE</div>
          <div className="mt-[18px] flex h-[60px] items-center justify-center rounded-[5px] border-2 border-[#bbbbbb] bg-linear-to-b from-[#fbfbfb] to-[#e6e6e6] text-[#333]">
            Insert an Expression...
          </div>
        </GroupBox>
        <Heading className="mt-[29px]">Patch</Heading>
        <GroupBox className="mt-[13px] h-[302px] pt-[27px] text-[#444]">
          <div className="flex h-[82px]">
            <div className="flex w-[185px] shrink-0 items-center">Shape</div>
            <div className="flex flex-1 items-center justify-center rounded-[5px] border-2 border-[#bbbbbb] bg-linear-to-b from-[#fbfbfb] to-[#e6e6e6]">
              <div className="h-[41px] w-[37px]">
                <Patch name="LAMBAYEQUE" />
              </div>
            </div>
            <div className="ml-[5px] flex w-[27px] items-center justify-center rounded-[5px] border-2 border-[#bbbbbb] bg-linear-to-b from-[#fbfbfb] to-[#e6e6e6]">
              <SmallArrow className="border-t-[#444]" />
            </div>
          </div>
          <div className="mt-[20px] h-[58px]">
            <NumberField label="Width (mm)" />
          </div>
          <div className="mt-[22px] h-[59px]">
            <NumberField label="Height (mm)" />
          </div>
        </GroupBox>
        <div className="mt-[23px] flex h-[35px] items-center">
          <div className="h-[35px] w-[36px] rounded-[3px] border-2 border-[#c4c4c4] bg-white" />
          <span className="ml-[15px] font-bold text-[#222]">Custom Symbol</span>
        </div>
        <GroupBox className="mt-[12px] h-[116px] pt-[29px]">
          <div className="flex h-[55px]">
            <div className="flex flex-1 items-center rounded-[5px] border-2 border-[#d0d0d0] bg-[#f0f0f0] px-[9px]">
              <div className="h-[25px] w-full bg-[#c0c5c8]" />
            </div>
            <div className="ml-[5px] flex w-[27px] items-center justify-center rounded-[5px] border-2 border-[#d0d0d0]">
              <SmallArrow className="border-t-[#c8c8c8]" />
            </div>
          </div>
        </GroupBox>
        <Heading className="mt-[29px]">Columns</Heading>
        <GroupBox className="mt-[12px] h-[117px] pt-[38px] text-[#444]">
          <div className="flex h-[35px] items-center">
            <div className="h-[35px] w-[35px] rounded-[3px] border-2 border-[#c4c4c4] bg-white" />
            <span className="ml-[14px]">Start a new column before this item</span>
          </div>
        </GroupBox>
      </div>
    </div>
  );
}

function StatusBar() {
  return (
    <div className="flex h-[75px] shrink-0 items-center bg-[#efefef] pl-[1882px] text-[28.5px] text-[#333]">
      <span className="w-[275px] shrink-0">x: 313.943 mm</span>
      <span className="w-[277px] shrink-0">y: 126.002 mm</span>
      <span className="w-[278px] shrink-0">página: 1</span>
      <div className="flex h-[61px] w-[565px] shrink-0 rounded-[5px] border-2 border-[#bbbbbb] bg-white">
        <div className="flex flex-1 items-center pl-[8px]">62.4%</div>
        <div className="flex w-[52px] items-center justify-center border-l-2 border-[#cfcfcf] bg-[#f0f0f0]">
          <SmallArrow className="border-t-[#444]" />
        </div>
      </div>
      <div className="relative ml-[20px] h-[14px] w-[253px] shrink-0 rounded-full border border-[#c4c4c4] bg-[#dcdcdc]">
        <div className="h-full w-[16px] rounded-l-full bg-[#4a90c8]" />
        <div className="absolute -top-[10px] left-[13px] h-[32px] w-[32px] rounded-[6px] border-2 border-[#c8c8c8] bg-[#fafafa]" />
      </div>
    </div>
  );
}

function Menu({ children }: { children: ReactNode }) {
  return <span>{children}</span>;
}

export default function App() {
  const ul = "underline underline-offset-[7px] decoration-2";
  return (
    <div className="relative flex h-[1930px] w-[3557px] flex-col overflow-hidden bg-[#eeeeee] font-['Noto_Sans',sans-serif] blur-[0.8px]">
      <div className="flex h-[72px] shrink-0 items-center border-t-[3px] border-[#333] bg-black">
        <div className="-mt-[4px] flex-1 text-center text-[32px] font-bold text-white">*Composición 1</div>
        <div className="flex gap-[20px] pr-[1px]">
          <div className="h-[38px] w-[38px] rounded-full bg-[#f57c00]" />
          <div className="h-[38px] w-[38px] rounded-full bg-[#3b7fed]" />
          <div className="h-[38px] w-[38px] rounded-full bg-[#cc1b1b]" />
        </div>
      </div>

      <div className="flex h-[54px] shrink-0 items-center gap-[39px] border-b-[3px] border-t border-[#dcdcdc] bg-[#efefef] pl-[27px] text-[28.5px] text-[#333]">
        <Menu>
          Di<span className={ul}>s</span>eño
        </Menu>
        <Menu>
          <span className={ul}>E</span>ditar
        </Menu>
        <Menu>
          <span className={ul}>V</span>er
        </Menu>
        <Menu>
          <span className={ul}>E</span>lementos
        </Menu>
        <Menu>
          <span className={ul}>A</span>ñadir elemento
        </Menu>
        <Menu>Atlas</Menu>
        <Menu>Configuración</Menu>
      </div>

      <Toolbar1 />
      <Toolbar2 />

      <div className="flex min-h-0 flex-1">
        <LeftTools />
        <div className="flex w-[2467px] shrink-0 flex-col">
          <HorizontalRuler />
          <div className="flex min-h-0 flex-1">
            <VerticalRuler />
            <div className="min-w-0 flex-1 overflow-hidden bg-[#d6d6d6] pl-[289px] pt-[95px]">
              <div className="flex h-[1288px] w-[1825px] items-start bg-white shadow-[16px_16px_0_#999999]">
                <PeruMap />
                <Legend />
              </div>
            </div>
          </div>
        </div>
        <PropertiesPanel />
      </div>

      <StatusBar />

      <svg viewBox="2190 1110 362 300" className="absolute left-[2190px] top-[1110px] h-[300px] w-[362px]">
        <polygon
          points="2302,1118 2397,1117 2547,1255 2402,1399 2305,1402 2417,1291 2195,1295 2194,1226 2415,1223"
          fill="#ff0000"
          stroke="#000"
          strokeWidth="4"
        />
      </svg>
    </div>
  );
}
